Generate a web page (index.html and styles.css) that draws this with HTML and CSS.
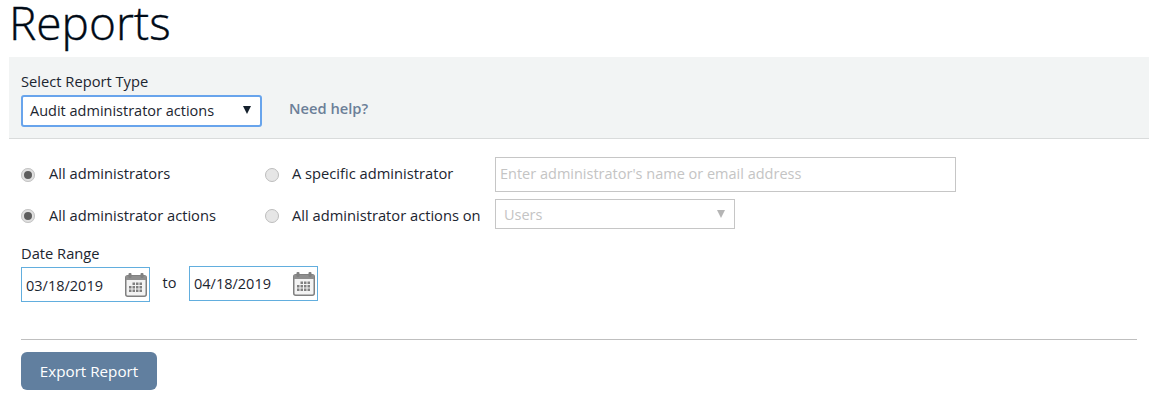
FILE: index.html
```html
<!DOCTYPE html>
<html lang="en">
<head>
    <meta charset="UTF-8">
    <meta name="viewport" content="width=device-width, initial-scale=1.0">
    <title>Reports</title>
    <link rel="stylesheet" href="styles.css">
</head>
<body>
    <h1>Reports</h1>
    <div class="type-panel">
        <div>
            <div class="label">Select Report Type</div>
            <div class="type-select">
                <span>Audit administrator actions</span>
                <span class="arrow"></span>
            </div>
        </div>
        <a class="help" href="#">Need help?</a>
    </div>
    <div class="filters">
        <div class="radio-row first-row">
            <span class="radio on"></span>
            <span class="radio-text col-one">All administrators</span>
            <span class="radio"></span>
            <span class="radio-text col-two">A specific administrator</span>
            <div class="text-box">Enter administrator's name or email address</div>
        </div>
        <div class="radio-row second-row">
            <span class="radio on"></span>
            <span class="radio-text col-one">All administrator actions</span>
            <span class="radio"></span>
            <span class="radio-text col-two">All administrator actions on</span>
            <div class="users-select">
                <span>Users</span>
                <span class="arrow-off"></span>
            </div>
        </div>
        <div class="label date-label">Date Range</div>
        <div class="date-row">
            <div class="date-box low">
                <span>03/18/2019</span>
                <svg class="cal" viewBox="0 0 22 25" width="22" height="25"><use href="#cal-icon"/></svg>
            </div>
            <span class="to">to</span>
            <div class="date-box">
                <span>04/18/2019</span>
                <svg class="cal" viewBox="0 0 22 25" width="22" height="25"><use href="#cal-icon"/></svg>
            </div>
        </div>
        <hr>
        <button type="button">Export Report</button>
    </div>

    <svg width="0" height="0" class="defs">
        <defs>
            <g id="cal-icon">
                <rect x="0.75" y="3.75" width="20.5" height="20.5" rx="2" fill="#f3f3f3" stroke="#808080" stroke-width="1.5"/>
                <rect x="1" y="4" width="20" height="4" fill="#8f8f8f"/>
                <rect x="3.5" y="1" width="3" height="5" rx="1" fill="#808080"/>
                <rect x="15.5" y="1" width="3" height="5" rx="1" fill="#808080"/>
                <path d="M7.500 10.500h2.500v2.500H7.500zM11 10.500h2.500v2.500H11zM14.500 10.500h2.500v2.500h-2.500zM4 14h2.500v2.500H4zM7.500 14h2.500v2.500H7.500zM11 14h2.500v2.500H11zM14.500 14h2.500v2.500h-2.500zM4 17.500h2.500v2.500H4zM7.500 17.500h2.500v2.500H7.500zM11 17.500h2.500v2.500H11zM14.500 17.500h2.500v2.500h-2.500z" fill="#808080"/>
            </g>
        </defs>
    </svg>
</body>
</html>
```
FILE: styles.css
```css
body {
    font-family: "Open Sans", "Noto Sans", sans-serif;
    font-size: 14.7px;
    line-height: 20px;
    margin: 0;
    padding: 0 12px 0 9px;
    background-color: #fff;
    color: #1c2530;
}
h1 {
    font-size: 46px;
    font-weight: 300;
    line-height: 45px;
    margin: 0;
    padding-bottom: 12px;
    color: #000a16;
    -webkit-text-stroke: 0.4px #000a16;
}
.type-panel {
    display: flex;
    align-items: flex-start;
    height: 82px;
    box-sizing: border-box;
    padding: 14px 12px 0;
    background: #f2f4f4;
    border-bottom: 1px solid #d9dbdb;
}
.label {
    line-height: 20px;
}
.type-select {
    display: flex;
    justify-content: space-between;
    align-items: center;
    box-sizing: border-box;
    width: 241px;
    height: 32px;
    margin-top: 4px;
    padding: 0 9px 0 7px;
    background: #fff;
    border: 2px solid #68a4ec;
    border-radius: 3px;
    font-size: 14.5px;
}
.arrow {
    width: 0;
    height: 0;
    margin-bottom: 3px;
    border-left: 4px solid transparent;
    border-right: 4px solid transparent;
    border-top: 8px solid #14202c;
}
.help {
    margin: 27px 0 0 27px;
    color: #6c7f98;
    font-weight: 600;
    text-decoration: none;
}
.filters {
    padding: 18px 12px 0;
}
.radio-row {
    display: flex;
    align-items: center;
}
.first-row {
    height: 35px;
}
.first-row .radio-text {
    padding-bottom: 3px;
}
.second-row {
    height: 30px;
    margin-top: 7px;
}
.second-row .radio-text {
    padding-top: 2px;
}
.second-row .radio {
    margin-top: 3px;
}
.radio {
    box-sizing: border-box;
    flex: none;
    width: 14px;
    height: 14px;
    border: 1px solid #bdbdbd;
    border-radius: 50%;
    background: #e6e6e6;
}
.radio.on {
    border: 3px solid #e0e0e0;
    outline: 1px solid #c4c4c4;
    outline-offset: -1px;
    background: #5e5e5e;
}
.radio-text {
    margin-left: 13px;
}
.col-one {
    width: 216px;
    margin-left: 14px;
}
.col-two {
    width: 203px;
}
.text-box {
    box-sizing: border-box;
    width: 461px;
    height: 35px;
    padding: 6px 4px;
    border: 1px solid #c6c6c6;
    color: #c4c4c4;
    font-size: 14.5px;
}
.users-select {
    display: flex;
    justify-content: space-between;
    align-items: center;
    box-sizing: border-box;
    width: 240px;
    height: 30px;
    padding: 2px 9px 0 8px;
    border: 1px solid #c6c6c6;
    color: #c4c4c4;
    font-size: 14.5px;
}
.arrow-off {
    width: 0;
    height: 0;
    margin-bottom: 2px;
    border-left: 4px solid transparent;
    border-right: 4px solid transparent;
    border-top: 8px solid #b5b5b5;
}
.date-label {
    margin-top: 14px;
}
.date-row {
    display: flex;
    align-items: flex-start;
    margin-top: 3px;
    font-size: 14.5px;
}
.date-box {
    display: flex;
    justify-content: space-between;
    align-items: center;
    box-sizing: border-box;
    width: 129px;
    height: 35px;
    padding: 0 2px 0 4px;
    border: 1px solid #62aede;
}
.date-box.low {
    margin-top: 1px;
}
.date-box.low span {
    padding-top: 2px;
}
.to {
    width: 39px;
    margin-top: 7px;
    text-align: center;
}
hr {
    height: 1px;
    margin: 37px 0 12px;
    border: 0;
    background: #bfbfbf;
}
button {
    display: block;
    width: 136px;
    height: 38px;
    padding: 0;
    background: #617f9f;
    color: #fff;
    border: none;
    border-radius: 6px;
    font-family: inherit;
    font-size: 15.2px;
    cursor: pointer;
}
.defs {
    position: absolute;
}
```
